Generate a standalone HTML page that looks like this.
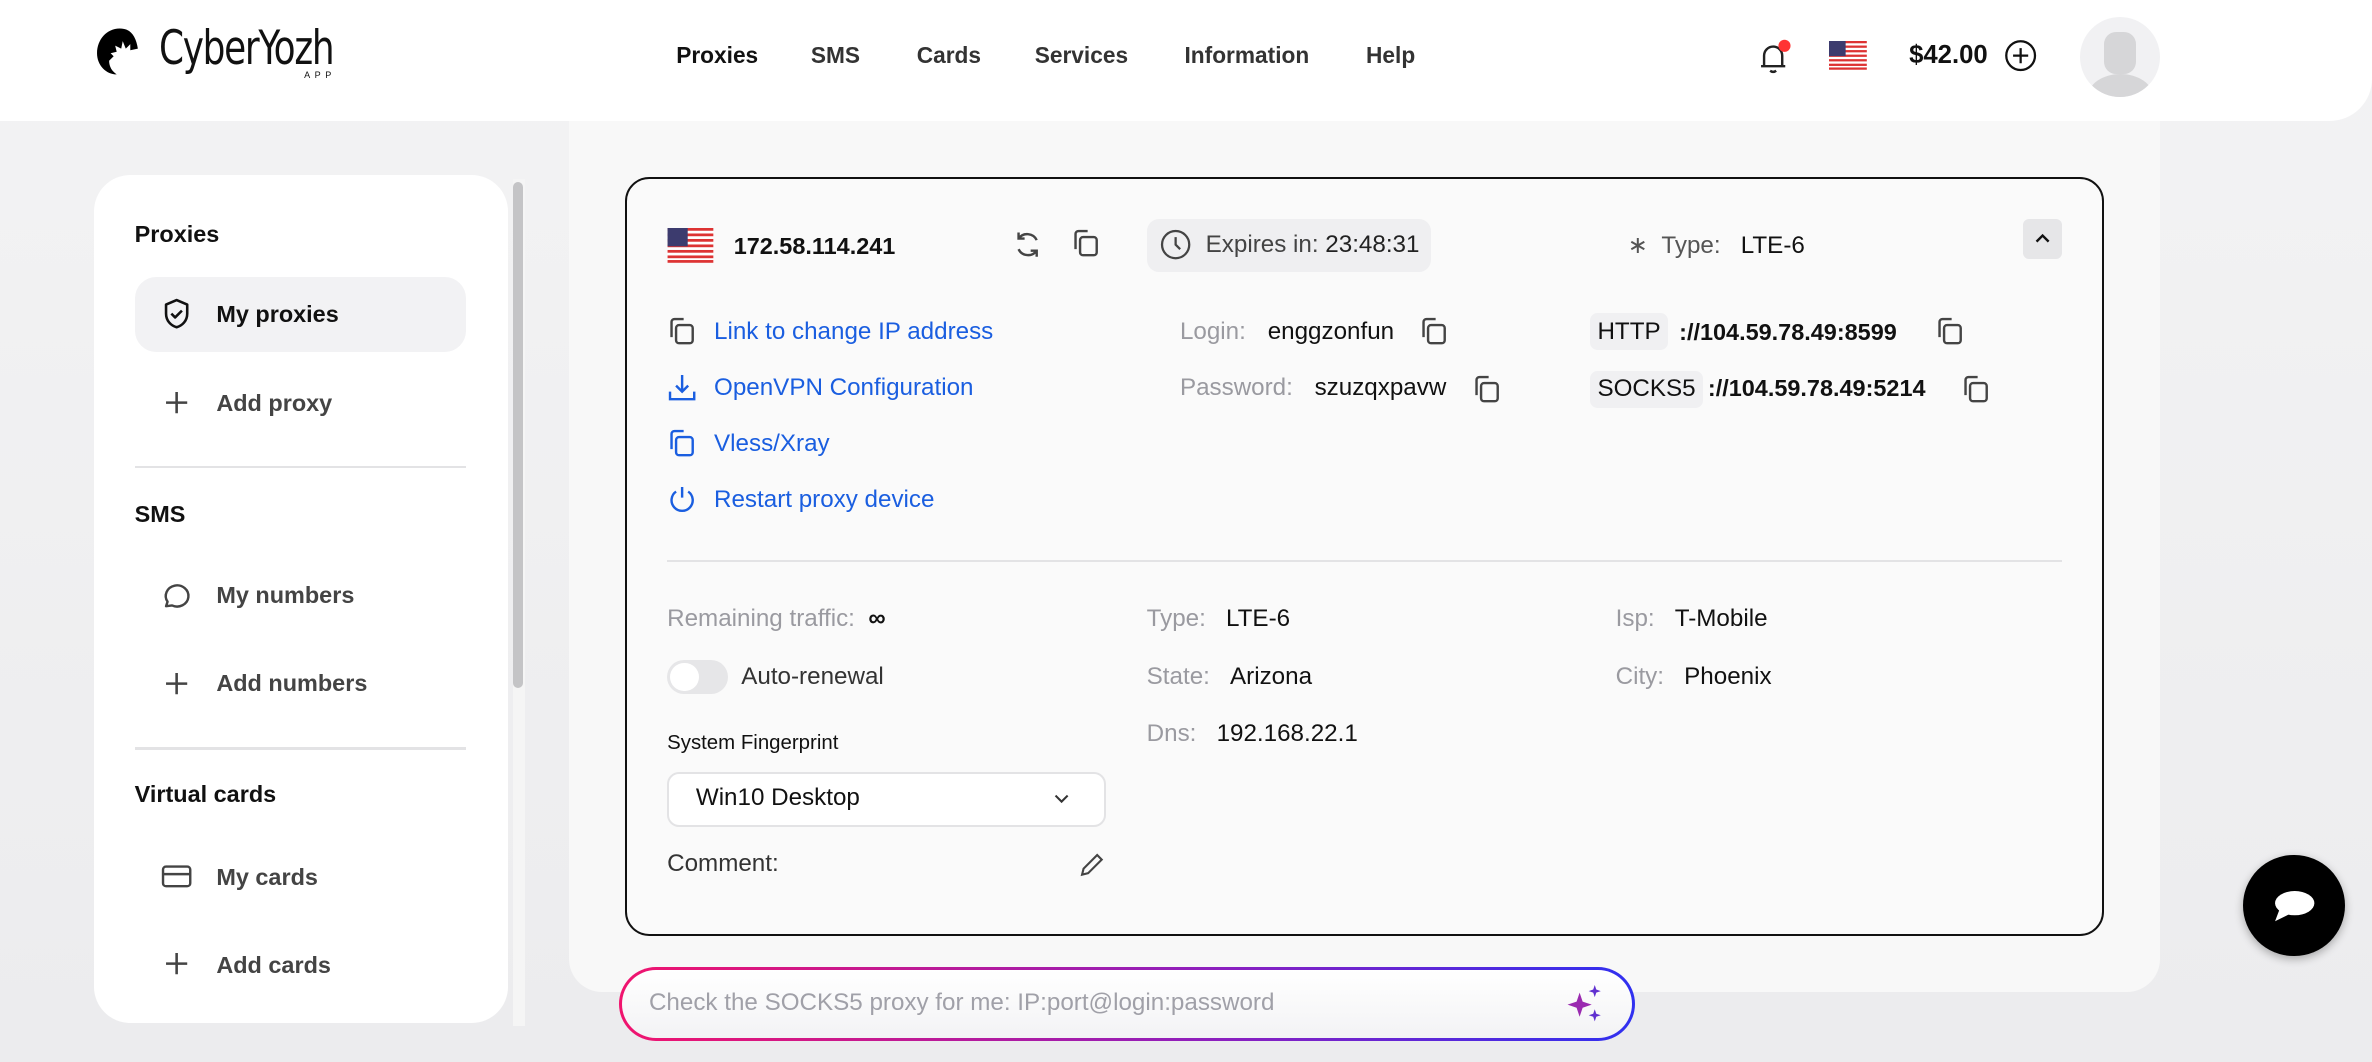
<!DOCTYPE html>
<html><head><meta charset="utf-8"><style>
*{box-sizing:border-box;margin:0;padding:0}
html,body{width:2372px;height:1062px;overflow:hidden}
body{background:linear-gradient(#f3f3f4,#ececee);font-family:"Liberation Sans",sans-serif;color:#111}
#r{zoom:1.51276;position:relative;width:1568px;height:702px}
.a{position:absolute;white-space:nowrap}
.hdr{left:0;top:0;width:1568px;height:80px;background:#fff;border-bottom-right-radius:28px}
.nav{top:28px;font-size:15px;font-weight:bold;color:#333}
.side{left:62px;top:116px;width:274px;height:560px;background:#fff;border-radius:24px}
.sh{font-size:15.5px;font-weight:bold;left:89px}
.si{font-size:15.5px;font-weight:bold;color:#444;left:143px}
.ic{left:106px;width:22px;height:22px}
.sep{left:89px;width:219px;height:1.5px;background:#e3e3e5}
.main{left:376px;top:50px;width:1052px;height:606px;background:#f8f8f8;border-radius:22px}
.card{left:413px;top:117px;width:978px;height:502px;border:1.5px solid #111;border-radius:16px;background:#fafafa}
.t{font-size:16px}
.g{color:#9a9aa0}
.b{color:#1a5ee0}
.k{font-weight:bold;font-size:15.5px}
.cp{width:20px;height:20px}
.tag{background:#f0f0f2;border-radius:5px;padding:3px 5px;font-size:16px}
</style></head><body><div id="r">
<div class="a main"></div>
<div class="a hdr"></div>
<svg class="a" style="left:62px;top:17px" width="34" height="34" viewBox="0 0 34 34"><path d="M20 2C10 0 2 8 2 18c0 8 6 14 13 14-3-2-5-5-5-9l3-3-2-2 4-1-1-4 4 2 1-5 2 5 3-3 0 4 5-1C28 8 25 3 20 2z" fill="#000"/></svg>
<div class="a" style="left:105px;top:14px;font-size:31px;font-family:'DejaVu Sans Condensed','Liberation Sans Narrow',sans-serif;letter-spacing:-1px;transform:scaleX(.85);transform-origin:left">CyberYozh</div>
<div class="a" style="left:201px;top:46px;font-size:6px;letter-spacing:3px">APP</div>
<div class="a nav" style="left:447px;color:#111">Proxies</div>
<div class="a nav" style="left:536px">SMS</div>
<div class="a nav" style="left:606px">Cards</div>
<div class="a nav" style="left:684px">Services</div>
<div class="a nav" style="left:783px">Information</div>
<div class="a nav" style="left:903px">Help</div>
<svg class="a" style="left:1160px;top:26px" width="26" height="24" viewBox="0 0 26 24"><path d="M4 18h16M6 18V11a6 6 0 0 1 12 0v7M10 21q2 1.5 4 0" fill="none" stroke="#222" stroke-width="1.6"/><circle cx="19.5" cy="4.5" r="4" fill="#f33"/></svg>
<svg class="a" style="left:1209px;top:27px" width="25" height="19" viewBox="0 0 25 19"><rect width="25" height="19" rx="2" fill="#fff"/><g fill="#d33"><rect y="0" width="25" height="1.5"/><rect y="3" width="25" height="1.5"/><rect y="6" width="25" height="1.5"/><rect y="9" width="25" height="1.5"/><rect y="12" width="25" height="1.5"/><rect y="15" width="25" height="1.5"/><rect y="17.5" width="25" height="1.5"/></g><rect width="11" height="10" fill="#3c3b6e"/></svg>
<div class="a" style="left:1262px;top:27px;font-size:17px;font-weight:bold">$42.00</div>
<svg class="a" style="left:1325px;top:26px" width="22" height="22" viewBox="0 0 22 22"><circle cx="11" cy="11" r="9.5" fill="none" stroke="#111" stroke-width="1.5"/><path d="M11 6v10M6 11h10" stroke="#111" stroke-width="1.5"/></svg>
<div class="a" style="left:1375px;top:11px;width:53px;height:53px;border-radius:50%;background:#f1f1f3;overflow:hidden"><div style="position:absolute;left:16px;top:10px;width:21px;height:28px;background:#d6d6d8;border-radius:8px"></div><div style="position:absolute;left:5px;top:38px;width:43px;height:30px;background:#d6d6d8;border-radius:50% 50% 0 0"></div></div>

<div class="a side"></div>
<div class="a" style="left:339px;top:118px;width:8px;height:560px;background:#f5f5f5"></div>
<div class="a" style="left:339px;top:120px;width:7px;height:335px;background:#c4c4c6;border-radius:4px"></div>
<div class="a sh" style="top:146px">Proxies</div>
<div class="a" style="left:89px;top:183px;width:219px;height:50px;background:#f2f2f4;border-radius:14px"></div>
<svg class="a ic" style="top:196px" viewBox="0 0 22 22"><path d="M11 2l7 3v6c0 5-3.5 8-7 9-3.5-1-7-4-7-9V5z M7.5 11l2.5 2.5 4.5-4.5" fill="none" stroke="#111" stroke-width="1.7" stroke-linejoin="round"/></svg>
<div class="a si" style="top:199px;color:#111">My proxies</div>
<svg class="a ic" style="top:255px" viewBox="0 0 22 22"><path d="M11 4v14M4 11h14" stroke="#444" stroke-width="1.7"/></svg>
<div class="a si" style="top:258px">Add proxy</div>
<div class="a sep" style="top:308px"></div>
<div class="a sh" style="top:331px">SMS</div>
<svg class="a ic" style="top:383px" viewBox="0 0 22 22"><path d="M4 18l1-3a7.5 7 0 1 1 3 2.5z" fill="none" stroke="#444" stroke-width="1.6" stroke-linejoin="round"/></svg>
<div class="a si" style="top:385px">My numbers</div>
<svg class="a ic" style="top:441px" viewBox="0 0 22 22"><path d="M11 4v14M4 11h14" stroke="#444" stroke-width="1.7"/></svg>
<div class="a si" style="top:443px">Add numbers</div>
<div class="a sep" style="top:494px"></div>
<div class="a sh" style="top:516px">Virtual cards</div>
<svg class="a ic" style="top:568px" viewBox="0 0 22 22"><rect x="2" y="5" width="18" height="13" rx="2" fill="none" stroke="#444" stroke-width="1.6"/><path d="M2 10h18" stroke="#444" stroke-width="1.6"/></svg>
<div class="a si" style="top:571px">My cards</div>
<svg class="a ic" style="top:626px" viewBox="0 0 22 22"><path d="M11 4v14M4 11h14" stroke="#444" stroke-width="1.7"/></svg>
<div class="a si" style="top:629px">Add cards</div>

<div class="a card"></div>
<svg class="a" style="left:441px;top:151px" width="31" height="23" viewBox="0 0 25 19"><rect width="25" height="19" rx="2" fill="#fff"/><g fill="#d33"><rect y="0" width="25" height="1.5"/><rect y="3" width="25" height="1.5"/><rect y="6" width="25" height="1.5"/><rect y="9" width="25" height="1.5"/><rect y="12" width="25" height="1.5"/><rect y="15" width="25" height="1.5"/><rect y="17.5" width="25" height="1.5"/></g><rect width="11" height="10" fill="#3c3b6e"/></svg>
<div class="a t k" style="left:485px;top:154px">172.58.114.241</div>
<svg class="a" style="left:668px;top:151px" width="22" height="22" viewBox="0 0 22 22"><path d="M17 8a7 7 0 0 0-12-1M5 14a7 7 0 0 0 12 1M5 3v4h4M17 19v-4h-4" fill="none" stroke="#444" stroke-width="1.6"/></svg>
<svg class="a cp" style="left:708px;top:151px" viewBox="0 0 20 20"><rect x="6" y="6" width="11" height="12" rx="2" fill="none" stroke="#444" stroke-width="1.6"/><path d="M3 14V4a2 2 0 0 1 2-2h6" fill="none" stroke="#444" stroke-width="1.6"/></svg>
<div class="a" style="left:758px;top:145px;width:188px;height:35px;background:#efeff1;border-radius:8px"></div>
<svg class="a" style="left:766px;top:151px" width="22" height="22" viewBox="0 0 22 22"><circle cx="11" cy="11" r="9" fill="none" stroke="#444" stroke-width="1.5"/><path d="M11 6v5l3 3" fill="none" stroke="#444" stroke-width="1.5"/></svg>
<div class="a t" style="left:797px;top:153px;color:#444">Expires in: <span style="color:#222">23:48:31</span></div>
<div class="a t" style="left:1076px;top:153px;color:#555">∗&nbsp;&nbsp;Type:&nbsp;&nbsp;&nbsp;<span style="color:#111">LTE-6</span></div>
<div class="a" style="left:1337px;top:145px;width:26px;height:26px;background:#e6e6e8;border-radius:4px"></div>
<svg class="a" style="left:1343px;top:151px" width="14" height="14" viewBox="0 0 14 14"><path d="M3 9l4-4 4 4" fill="none" stroke="#111" stroke-width="1.6"/></svg>

<svg class="a cp" style="left:441px;top:209px" viewBox="0 0 20 20"><rect x="6" y="6" width="11" height="12" rx="2" fill="none" stroke="#444" stroke-width="1.6"/><path d="M3 14V4a2 2 0 0 1 2-2h6" fill="none" stroke="#444" stroke-width="1.6"/></svg>
<div class="a t b" style="left:472px;top:210px">Link to change IP address</div>
<svg class="a cp" style="left:441px;top:246px" viewBox="0 0 20 20"><path d="M10 2v11M6 9l4 4 4-4M2 13v5h16v-5" fill="none" stroke="#1a5ee0" stroke-width="1.6"/></svg>
<div class="a t b" style="left:472px;top:247px">OpenVPN Configuration</div>
<svg class="a cp" style="left:441px;top:283px" viewBox="0 0 20 20"><rect x="6" y="6" width="11" height="12" rx="2" fill="none" stroke="#1a5ee0" stroke-width="1.6"/><path d="M3 14V4a2 2 0 0 1 2-2h6" fill="none" stroke="#1a5ee0" stroke-width="1.6"/></svg>
<div class="a t b" style="left:472px;top:284px">Vless/Xray</div>
<svg class="a cp" style="left:441px;top:320px" viewBox="0 0 20 20"><path d="M10 2v7M6 5a7 7 0 1 0 8 0" fill="none" stroke="#1a5ee0" stroke-width="1.6"/></svg>
<div class="a t b" style="left:472px;top:321px">Restart proxy device</div>

<div class="a t g" style="left:780px;top:210px">Login:</div>
<div class="a t" style="left:838px;top:210px">enggzonfun</div>
<svg class="a cp" style="left:938px;top:209px" viewBox="0 0 20 20"><rect x="6" y="6" width="11" height="12" rx="2" fill="none" stroke="#444" stroke-width="1.6"/><path d="M3 14V4a2 2 0 0 1 2-2h6" fill="none" stroke="#444" stroke-width="1.6"/></svg>
<div class="a t g" style="left:780px;top:247px">Password:</div>
<div class="a t" style="left:869px;top:247px">szuzqxpavw</div>
<svg class="a cp" style="left:973px;top:247px" viewBox="0 0 20 20"><rect x="6" y="6" width="11" height="12" rx="2" fill="none" stroke="#444" stroke-width="1.6"/><path d="M3 14V4a2 2 0 0 1 2-2h6" fill="none" stroke="#444" stroke-width="1.6"/></svg>
<div class="a tag" style="left:1051px;top:207px">HTTP</div>
<div class="a t k" style="left:1110px;top:211px">://104.59.78.49:8599</div>
<svg class="a cp" style="left:1279px;top:209px" viewBox="0 0 20 20"><rect x="6" y="6" width="11" height="12" rx="2" fill="none" stroke="#444" stroke-width="1.6"/><path d="M3 14V4a2 2 0 0 1 2-2h6" fill="none" stroke="#444" stroke-width="1.6"/></svg>
<div class="a tag" style="left:1051px;top:245px">SOCKS5</div>
<div class="a t k" style="left:1129px;top:248px">://104.59.78.49:5214</div>
<svg class="a cp" style="left:1296px;top:247px" viewBox="0 0 20 20"><rect x="6" y="6" width="11" height="12" rx="2" fill="none" stroke="#444" stroke-width="1.6"/><path d="M3 14V4a2 2 0 0 1 2-2h6" fill="none" stroke="#444" stroke-width="1.6"/></svg>

<div class="a" style="left:441px;top:370px;width:922px;height:1.5px;background:#e3e3e5"></div>
<div class="a t g" style="left:441px;top:400px">Remaining traffic:&nbsp;&nbsp;<span style="color:#111;font-weight:bold">∞</span></div>
<div class="a" style="left:441px;top:436px;width:40px;height:23px;background:#e6e6e8;border-radius:12px"><div style="position:absolute;left:2px;top:2px;width:19px;height:19px;border-radius:50%;background:#fff"></div></div>
<div class="a t" style="left:490px;top:438px;color:#333">Auto-renewal</div>
<div class="a" style="left:441px;top:484px;font-size:13.5px">System Fingerprint</div>
<div class="a" style="left:441px;top:510px;width:290px;height:37px;border:1.5px solid #e3e3e5;border-radius:8px;background:#fff"></div>
<div class="a t" style="left:460px;top:518px">Win10 Desktop</div>
<svg class="a" style="left:695px;top:521px" width="14" height="14" viewBox="0 0 14 14"><path d="M3 5l4 4 4-4" fill="none" stroke="#333" stroke-width="1.4"/></svg>
<div class="a t" style="left:441px;top:562px;color:#333">Comment:</div>
<svg class="a" style="left:711px;top:561px" width="20" height="20" viewBox="0 0 20 20"><path d="M4 17l1-4 9-9 3 3-9 9z" fill="none" stroke="#444" stroke-width="1.4"/></svg>

<div class="a t g" style="left:758px;top:400px">Type:&nbsp;&nbsp;&nbsp;<span style="color:#111">LTE-6</span></div>
<div class="a t g" style="left:758px;top:438px">State:&nbsp;&nbsp;&nbsp;<span style="color:#111">Arizona</span></div>
<div class="a t g" style="left:758px;top:476px">Dns:&nbsp;&nbsp;&nbsp;<span style="color:#111">192.168.22.1</span></div>
<div class="a t g" style="left:1068px;top:400px">Isp:&nbsp;&nbsp;&nbsp;<span style="color:#111">T-Mobile</span></div>
<div class="a t g" style="left:1068px;top:438px">City:&nbsp;&nbsp;&nbsp;<span style="color:#111">Phoenix</span></div>

<div class="a" style="left:409px;top:639px;width:672px;height:49px;border-radius:25px;background:linear-gradient(90deg,#f0146e,#8a20c0 60%,#3030f0);padding:2px"><div style="width:100%;height:100%;border-radius:23px;background:linear-gradient(#fff,#f3f3f5)"></div></div>
<div class="a t" style="left:429px;top:654px;color:#a0a0a8">Check the SOCKS5 proxy for me: IP:port@login:password</div>
<svg class="a" style="left:1035px;top:649px" width="26" height="28" viewBox="0 0 26 28"><path d="M9 7l2 6 6 2-6 2-2 6-2-6-6-2 6-2z" fill="#9a2ab0"/><path d="M19 2l1 3 3 1-3 1-1 3-1-3-3-1 3-1zM19 18l1 3 3 1-3 1-1 3-1-3-3-1 3-1z" fill="#6030d0"/></svg>

<div class="a" style="left:1483px;top:565px;width:67px;height:67px;border-radius:50%;background:#000;box-shadow:0 2px 6px rgba(0,0,0,.3)"></div>
<svg class="a" style="left:1500px;top:585px" width="34" height="28" viewBox="0 0 34 28"><ellipse cx="17" cy="12" rx="13" ry="8" fill="#fff"/><path d="M7 16l-3 8 10-5z" fill="#fff"/></svg>
</div></body></html>
